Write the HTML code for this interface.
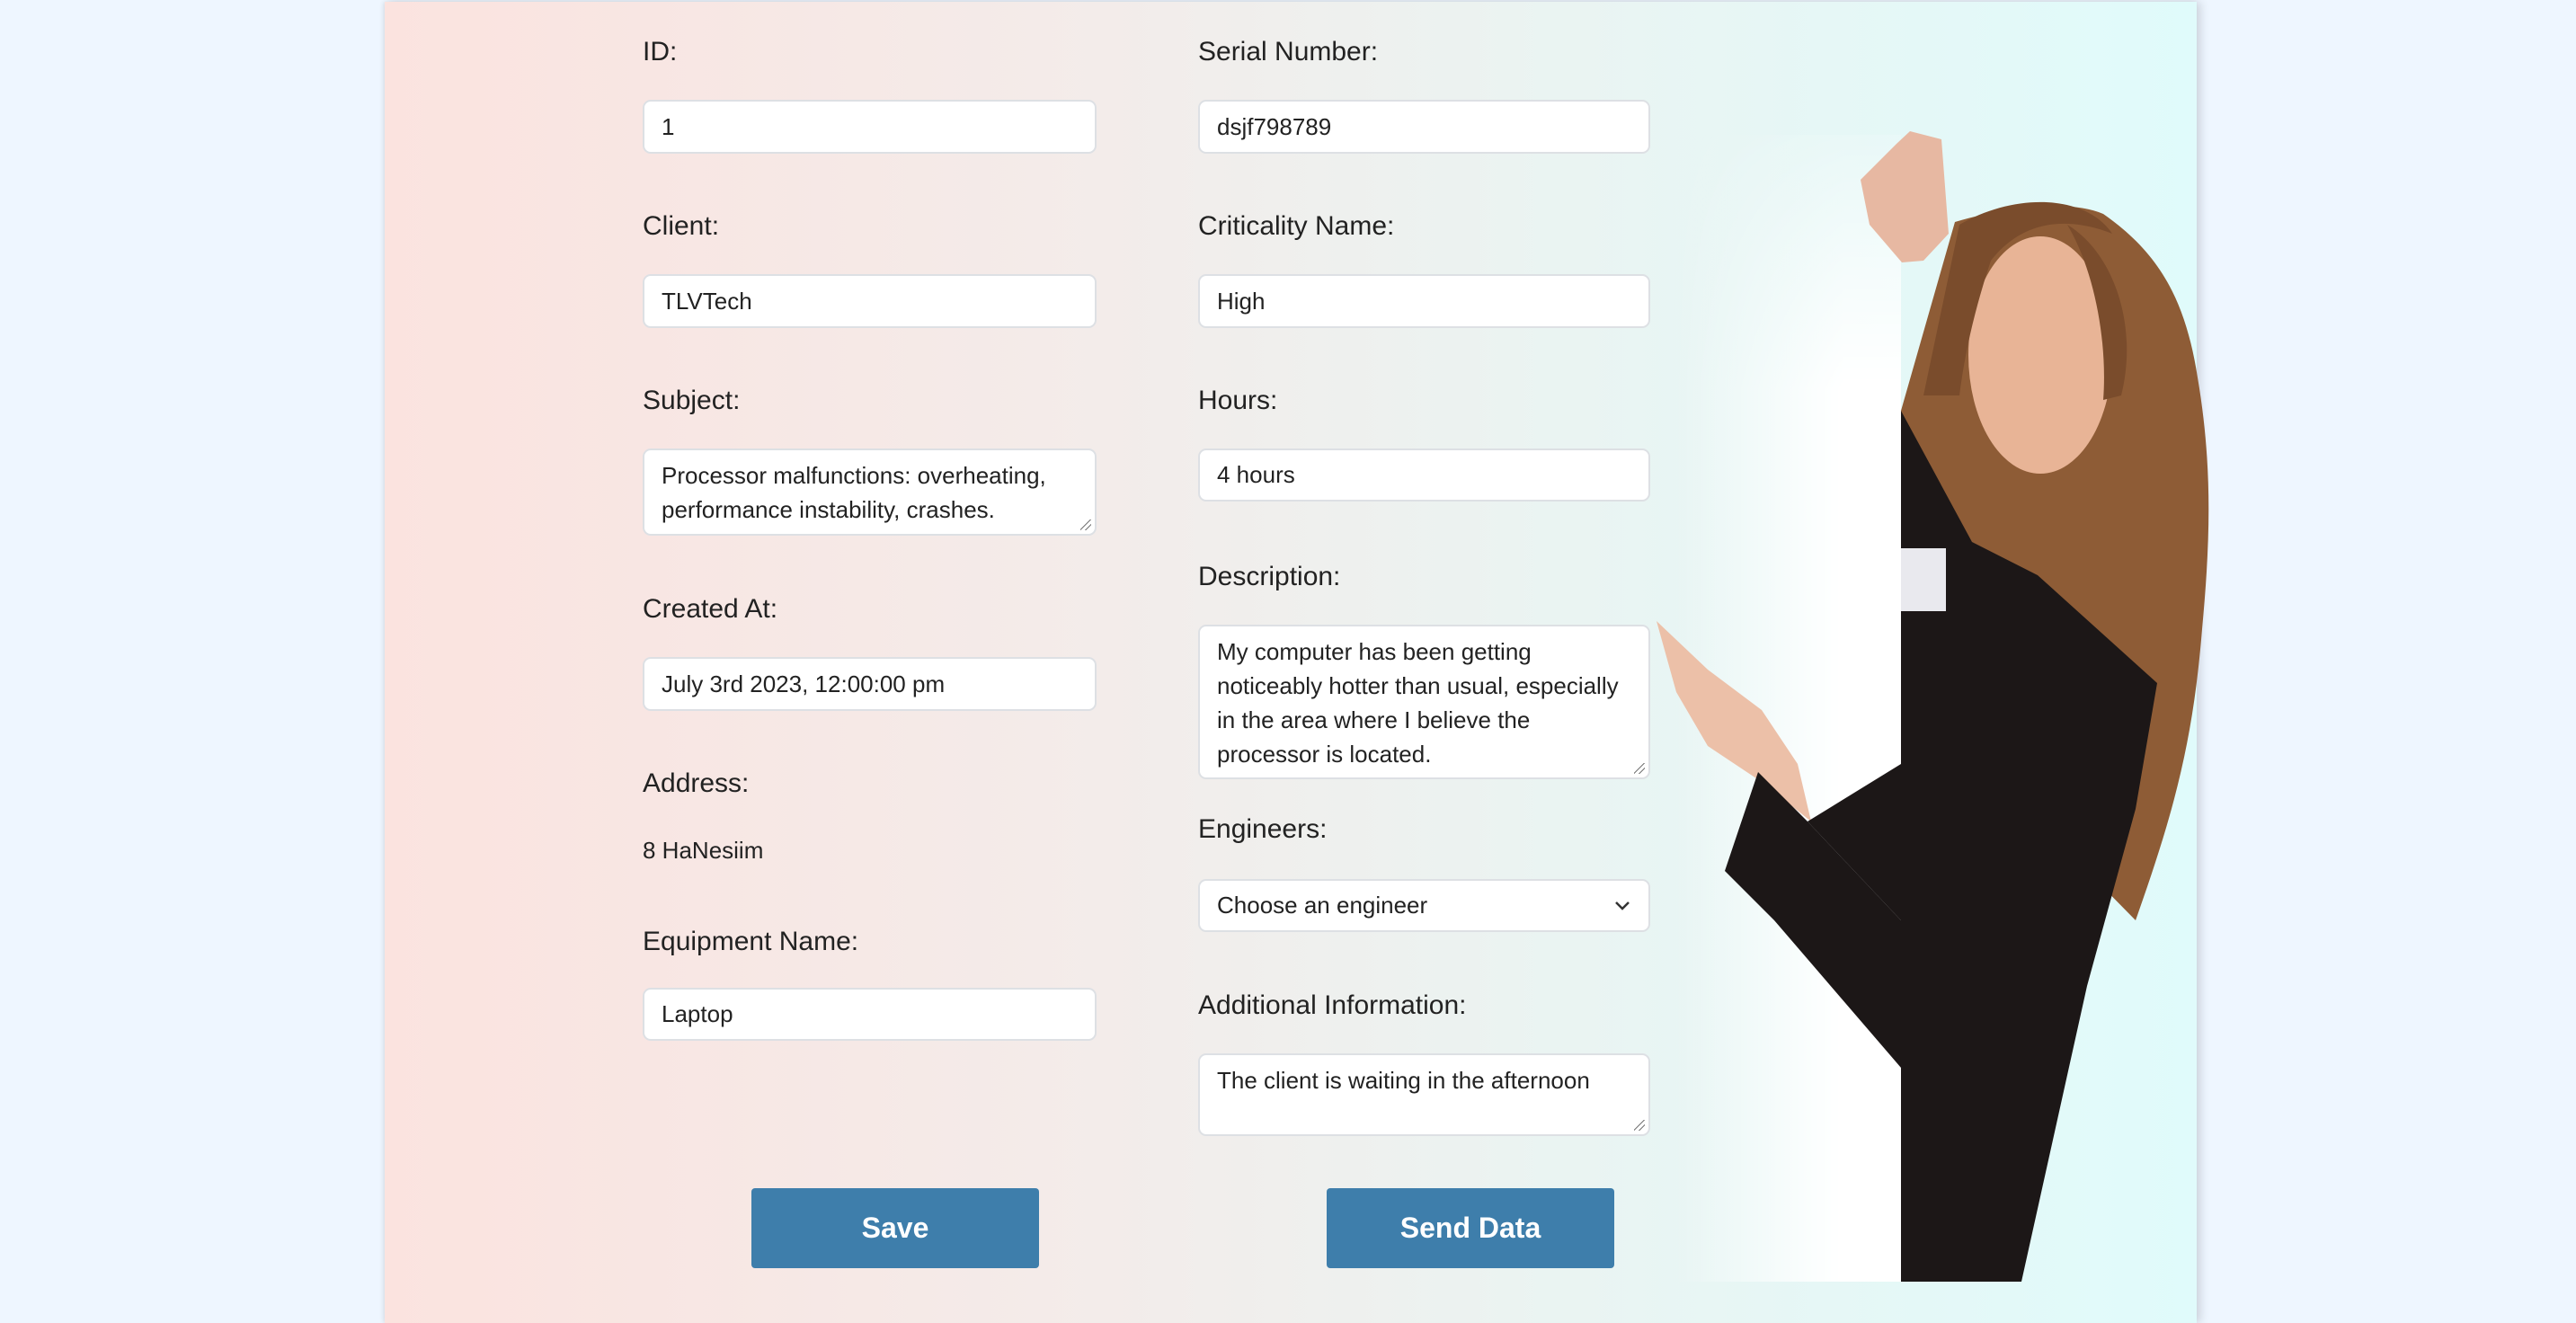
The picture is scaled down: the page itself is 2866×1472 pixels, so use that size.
<!DOCTYPE html>
<html><head><meta charset="utf-8"><style>
html,body{margin:0;padding:0}
body{width:2866px;height:1466px;overflow:hidden;background:#eef6ff;font-family:"Liberation Sans",Arial,sans-serif;position:relative}
.card{position:absolute;left:428px;top:2px;width:2016px;height:1470px;background:linear-gradient(90deg,#fbe3df 0%,#f3ecea 40%,#eaf4f2 65%,#e0fbfb 100%);box-shadow:4px 0 10px rgba(0,0,0,.15),-2px 0 4px rgba(0,0,0,.06)}
.lbl{position:absolute;font-size:30px;color:#222}
.in{position:absolute;background:#fff;border:2px solid #dde0e4;border-radius:9px;box-sizing:border-box;font-size:26px;color:#222;padding:0 19px;display:flex;align-items:center}
.ta{align-items:flex-start;padding-top:9px;line-height:38px}
.btn{position:absolute;width:320px;height:89px;top:1322px;background:#3e7eab;border-radius:4px;color:#fff;font-weight:bold;font-size:32px;display:flex;align-items:center;justify-content:center}
.grip{position:absolute;right:4px;bottom:4px;width:12px;height:12px;background:linear-gradient(135deg,transparent 45%,#777 45%,#777 52%,transparent 52%,transparent 70%,#777 70%,#777 77%,transparent 77%)}
</style></head><body>
<div class="card"></div>
<svg style="position:absolute;left:1800px;top:100px" width="680" height="1330" viewBox="1800 100 680 1330">
<defs><linearGradient id="w" x1="0" x2="1"><stop offset="0" stop-color="#fff" stop-opacity="0"/><stop offset="0.75" stop-color="#fff"/></linearGradient>
<linearGradient id="v" x1="0" y1="0" x2="0" y2="1"><stop offset="0" stop-color="#fff" stop-opacity="0"/><stop offset="0.25" stop-color="#fff" stop-opacity="1"/></linearGradient>
<mask id="m"><rect x="1800" y="100" width="680" height="1330" fill="url(#v)"/></mask></defs>
<rect x="1860" y="150" width="255" height="1276" fill="url(#w)" mask="url(#m)"/>
<path d="M2175 247 C2250 225 2310 225 2340 238 C2400 280 2431 330 2445 420 C2462 520 2459 603 2450 700 C2440 823 2420 900 2376 1024 L2322 969 L2160 600 L2115 457 Z" fill="#8e5c36"/>
<path d="M2115 457 L2194 603 L2267 640 L2400 760 L2376 900 L2322 1097 L2249 1426 L2115 1426 Z" fill="#1c1717"/>
<ellipse cx="2270" cy="395" rx="80" ry="132" fill="#e8b496"/>
<path d="M2180 250 C2240 215 2320 215 2350 260 C2300 240 2250 245 2215 290 C2195 350 2185 400 2180 440 L2140 440 Z" fill="#7a4c2c"/>
<path d="M2300 250 C2350 280 2380 360 2360 440 L2340 445 C2345 380 2330 300 2300 250 Z" fill="#7a4c2c"/>
<rect x="2115" y="610" width="50" height="70" fill="#e9e9ee"/>
<path d="M2116 292 L2080 250 L2070 200 L2110 160 L2125 146 L2160 155 L2168 260 L2140 290 Z" fill="#e7b8a2"/>
<path d="M1843 691 L1900 745 L1960 790 L2000 850 L2015 914 L1960 870 L1900 830 L1865 770 Z" fill="#ecc0a8"/>
<path d="M2115 1024 L2011 914 L1956 859 L1919 969 L1974 1024 L2115 1188 Z" fill="#1c1717"/>
<path d="M2011 914 L2115 850 L2115 1024 Z" fill="#1c1717"/>
</svg>

<div class="lbl" style="left:715px;top:41px">ID:</div>
<div class="in" style="left:715px;top:111px;width:505px;height:60px">1</div>
<div class="lbl" style="left:715px;top:235px">Client:</div>
<div class="in" style="left:715px;top:305px;width:505px;height:60px">TLVTech</div>
<div class="lbl" style="left:715px;top:429px">Subject:</div>
<div class="in ta" style="left:715px;top:499px;width:505px;height:97px">Processor malfunctions: overheating, performance instability, crashes.<div class="grip"></div></div>
<div class="lbl" style="left:715px;top:661px">Created At:</div>
<div class="in" style="left:715px;top:731px;width:505px;height:60px">July 3rd 2023, 12:00:00 pm</div>
<div class="lbl" style="left:715px;top:855px">Address:</div>
<div style="position:absolute;left:715px;top:931px;font-size:26px;color:#222">8 HaNesiim</div>
<div class="lbl" style="left:715px;top:1031px">Equipment Name:</div>
<div class="in" style="left:715px;top:1099px;width:505px;height:59px">Laptop</div>

<div class="lbl" style="left:1333px;top:41px">Serial Number:</div>
<div class="in" style="left:1333px;top:111px;width:503px;height:60px">dsjf798789</div>
<div class="lbl" style="left:1333px;top:235px">Criticality Name:</div>
<div class="in" style="left:1333px;top:305px;width:503px;height:60px">High</div>
<div class="lbl" style="left:1333px;top:429px">Hours:</div>
<div class="in" style="left:1333px;top:499px;width:503px;height:59px">4 hours</div>
<div class="lbl" style="left:1333px;top:625px">Description:</div>
<div class="in ta" style="left:1333px;top:695px;width:503px;height:172px">My computer has been getting noticeably hotter than usual, especially in the area where I believe the processor is located.<div class="grip"></div></div>
<div class="lbl" style="left:1333px;top:906px">Engineers:</div>
<div class="in" style="left:1333px;top:978px;width:503px;height:59px;justify-content:space-between">Choose an engineer<svg width="20" height="14" viewBox="0 0 20 14"><path d="M3 3 L10 10 L17 3" fill="none" stroke="#333" stroke-width="2.5"/></svg></div>
<div class="lbl" style="left:1333px;top:1102px">Additional Information:</div>
<div class="in ta" style="left:1333px;top:1172px;width:503px;height:92px">The client is waiting in the afternoon<div class="grip"></div></div>

<div class="btn" style="left:836px">Save</div>
<div class="btn" style="left:1476px">Send Data</div>
</body></html>
